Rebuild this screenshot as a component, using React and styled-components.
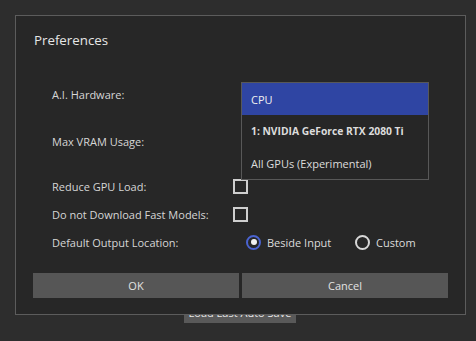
import React from 'react';
import styled, { createGlobalStyle } from 'styled-components';

const GlobalStyle = createGlobalStyle`
  html, body {
    margin: 0;
    padding: 0;
    background: #2d2d2d;
  }
  body {
    font-family: "Open Sans", "Noto Sans", sans-serif;
    color: #dcdcdc;
  }
`;

const Page = styled.div`
  position: relative;
  width: 476px;
  height: 341px;
  overflow: hidden;
  background: #2d2d2d;
  display: flex;
  flex-direction: column;
  align-items: center;
`;

const BackButton = styled.div`
  margin-top: 302px;
  margin-left: 4px;
  width: 112px;
  height: 21px;
  background: #595959;
  color: #e8e8e8;
  font-size: 11px;
  display: flex;
  align-items: center;
  justify-content: center;
`;

const Dialog = styled.div`
  position: absolute;
  left: 15px;
  top: 15px;
  width: 451px;
  height: 300px;
  box-sizing: border-box;
  background: #272727;
  border: 1px solid #5c5c5c;
  padding: 0 17px 0 17px;
  display: flex;
  flex-direction: column;
`;

const Title = styled.div`
  margin-top: 14px;
  margin-left: 1px;
  font-size: 13.3px;
  line-height: 20px;
  color: #e6e6e6;
`;

const Form = styled.div`
  margin-top: 27px;
  padding-left: 19px;
  display: flex;
  flex-direction: column;
`;

const Row = styled.div`
  position: relative;
  height: ${p => p.$h}px;
  display: grid;
  grid-template-columns: 181px 1fr;
  align-items: center;
  font-size: 11px;
`;

const Label = styled.div`
  color: #d6d6d6;
`;

const Controls = styled.div`
  display: flex;
  align-items: center;
`;

const Checkbox = styled.div`
  width: 11px;
  height: 11px;
  border: 2px solid #cfcfcf;
`;

const RadioOption = styled.div`
  display: flex;
  align-items: center;
  gap: 6px;
  width: ${p => (p.$w ? `${p.$w}px` : 'auto')};
  margin-left: ${p => p.$ml || 0}px;
  color: #dcdcdc;
`;

const Radio = styled.div`
  width: 15px;
  height: 15px;
  box-sizing: border-box;
  border-radius: 50%;
  border: 2px solid ${p => (p.$checked ? '#4a63d0' : '#d8d8d8')};
  display: flex;
  align-items: center;
  justify-content: center;
  &::after {
    content: '';
    width: 6px;
    height: 6px;
    border-radius: 50%;
    background: ${p => (p.$checked ? '#f2f2f2' : 'transparent')};
  }
`;

const Popup = styled.div`
  position: absolute;
  top: 5px;
  left: 189px;
  width: 186px;
  background: #262626;
  border: 1px solid #585858;
  z-index: 2;
`;

const PopupItem = styled.div`
  height: 32px;
  padding-left: 9px;
  display: flex;
  align-items: center;
  font-size: ${p => (p.$bold ? 10.3 : 11)}px;
  font-weight: ${p => (p.$bold ? 700 : 400)};
  background: ${p => (p.$active ? '#2f45a3' : 'transparent')};
  color: ${p => (p.$active ? '#f0f0f0' : '#dcdcdc')};
`;

const ButtonRow = styled.div`
  margin-top: 17px;
  display: grid;
  grid-template-columns: 1fr 1fr;
  gap: 3px;
`;

const Button = styled.div`
  height: 25px;
  background: #565656;
  color: #e2e2e2;
  font-size: 11px;
  display: flex;
  align-items: center;
  justify-content: center;
`;

const options = [
  { label: 'CPU', active: true },
  { label: '1: NVIDIA GeForce RTX 2080 Ti', bold: true },
  { label: 'All GPUs (Experimental)' },
];

export default function App() {
  return (
    <>
      <GlobalStyle />
      <Page>
        <BackButton>Load Last Auto Save</BackButton>
        <Dialog>
          <Title>Preferences</Title>
          <Form>
            <Row $h={34}>
              <Label>A.I. Hardware:</Label>
              <Controls />
              <Popup>
                {options.map(o => (
                  <PopupItem key={o.label} $active={o.active} $bold={o.bold}>
                    {o.label}
                  </PopupItem>
                ))}
              </Popup>
            </Row>
            <Row $h={60}>
              <Label>Max VRAM Usage:</Label>
              <Controls />
            </Row>
            <Row $h={30}>
              <Label>Reduce GPU Load:</Label>
              <Controls><Checkbox /></Controls>
            </Row>
            <Row $h={27}>
              <Label>Do not Download Fast Models:</Label>
              <Controls><Checkbox /></Controls>
            </Row>
            <Row $h={28}>
              <Label>Default Output Location:</Label>
              <Controls>
                <RadioOption $ml={13} $w={109}>
                  <Radio $checked />
                  Beside Input
                </RadioOption>
                <RadioOption>
                  <Radio />
                  Custom
                </RadioOption>
              </Controls>
            </Row>
          </Form>
          <ButtonRow>
            <Button>OK</Button>
            <Button>Cancel</Button>
          </ButtonRow>
        </Dialog>
      </Page>
    </>
  );
}
